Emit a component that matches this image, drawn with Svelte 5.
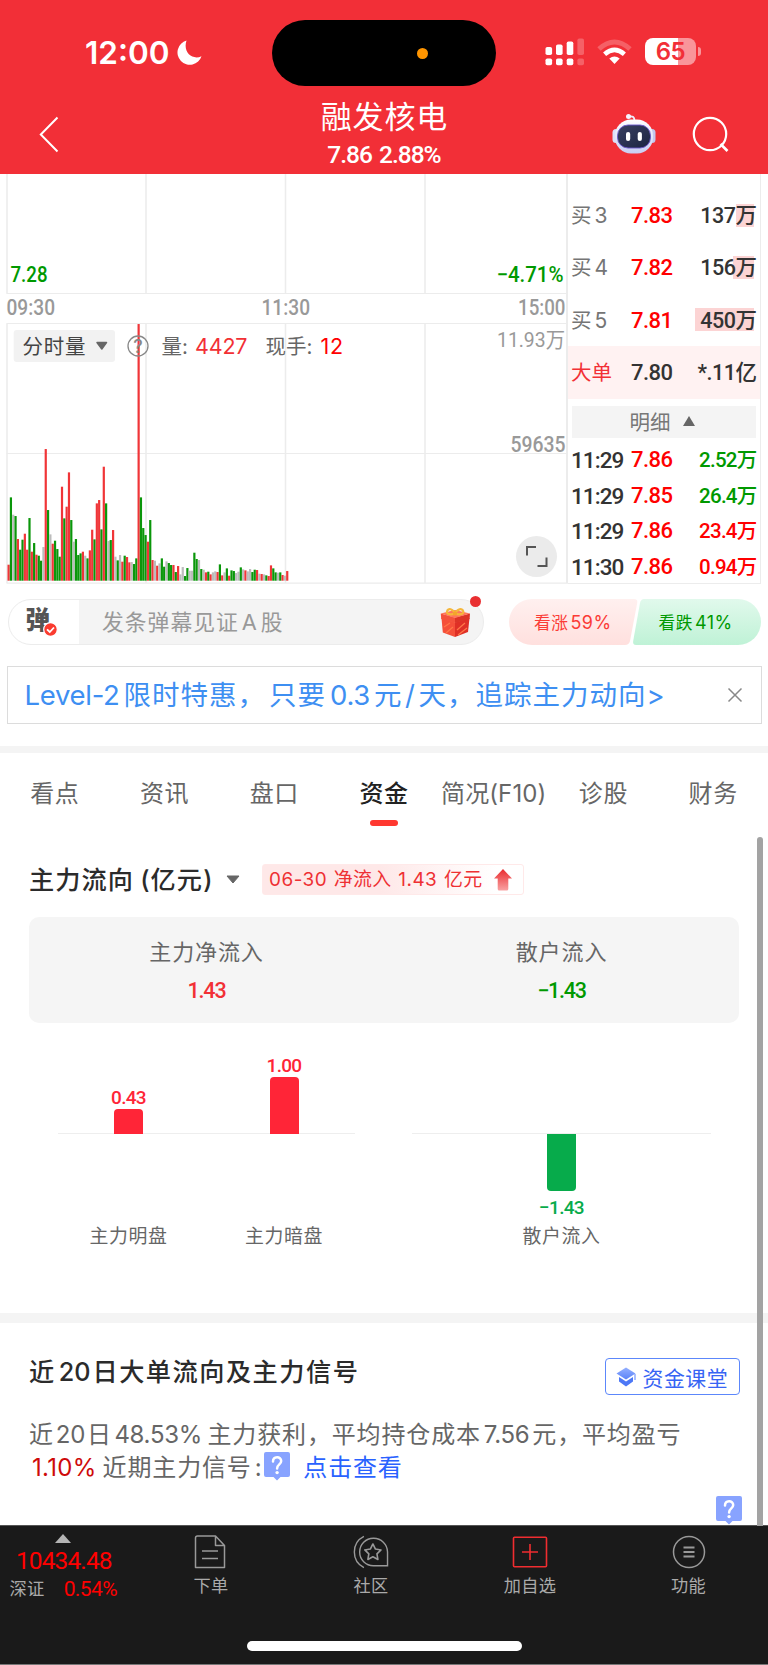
<script>
  // Minute volumes: R = up, G = down, g = flat, followed by the height in thirds of a pixel.
  const volume =
    'R48 G250 g198 G194 R125 G93 G123 R141 R93 G188 R87 G113 R78 G75 G60 g101 R395 G212 g139 R111 G120 G95 G72 R282 G187 R222 R325 G182 g117 G125 G77 G82 R87 g75 G67 R91 R153 G124 R232 R242 G154 R342 G232 g119 G122 R152 g72 G61 g77 R57 G75 R71 R55 g56 G50 G67 R770 G250 G158 G137 R117 G182 R62 g60 R45 g52 G67 G42 g58 G53 G47 R47 G26 R44 g19 g41 G14 G38 g30 g30 G84 G65 g62 G35 g33 R25 G27 R19 g25 g28 R26 G49 R16 g25 G37 R15 G31 G29 g23 g27 G40 g34 R31 g28 g35 G26 G33 R32 g21 R20 g19 G16 R14 R46 G37 G25 g24 G25 R17 g15 R29';
  const tone = { R: '#f03538', G: '#0a960a', g: '#bcbcbc' };
  const bars = volume.split(' ').map((v, i) => ({
    x: 7.5 + i * 2.322,
    h: Number(v.slice(1)) / 3,
    c: tone[v[0]]
  }));
  const bids = [
    { n: '3', price: '7.83', qty: '137', w: 18 },
    { n: '4', price: '7.82', qty: '156', w: 21 },
    { n: '5', price: '7.81', qty: '450', w: 59 }
  ];
  const trades = [
    { t: '11:29', price: '7.86', qty: '2.52', up: false },
    { t: '11:29', price: '7.85', qty: '26.4', up: false },
    { t: '11:29', price: '7.86', qty: '23.4', up: true },
    { t: '11:30', price: '7.86', qty: '0.94', up: true }
  ];
  const tabs = ['看点', '资讯', '盘口', '资金', '简况(F10)', '诊股', '财务'];
</script>

{#snippet help()}
  <svg class="help" width="26" height="29" viewBox="0 0 26 29">
    <path d="M2 0H24Q26 0 26 2V23Q26 25 24 25H16.5L13 28.5L9.500 25H2Q0 25 0 23V2Q0 0 2 0Z" fill="#88a3ff" />
    <path d="M9 9.500C9 3.800 17.200 4 17.200 9C17.200 12.500 13.100 12.300 13.100 16.500" fill="none" stroke="#fff" stroke-width="2.500" stroke-linecap="round" />
    <circle cx="13.1" cy="20.6" r="1.7" fill="#fff" />
  </svg>
{/snippet}

<div class="app">
  <header>
    <div class="status">
      <div class="clock">
        <span>12:00</span>
        <svg width="25" height="26" viewBox="0 0 25 26"><path d="M9.500 0.600A12.300 12.300 0 1 0 24.500 16.200C16 20.500 5.500 13 9.500 0.600Z" fill="#fff" /></svg>
      </div>
      <div class="island"><i></i></div>
      <div class="signals">
        <svg width="40" height="28" viewBox="0 0 40 28" fill="#fff">
          <rect x="0.500" y="9" width="6.600" height="8" rx="1.800" /><rect x="11" y="6.500" width="6.600" height="10.500" rx="1.800" /><rect x="21.700" y="3.500" width="6.600" height="13.500" rx="1.800" />
          <rect x="0.500" y="20.500" width="6.600" height="6.800" rx="1.800" /><rect x="11" y="20.500" width="6.600" height="6.800" rx="1.800" /><rect x="21.700" y="20.500" width="6.600" height="6.800" rx="1.800" />
          <g opacity=".24"><rect x="32.400" y="0.500" width="6.600" height="16.500" rx="1.800" /><rect x="32.400" y="20.500" width="6.600" height="6.800" rx="1.800" /></g>
        </svg>
        <svg width="35" height="26" viewBox="0 0 35 26" fill="none" stroke="#fff">
          <path d="M2 10Q17.500 -4 33 10" stroke-width="5" opacity=".24" />
          <path d="M7.600 15.200Q17.500 6.500 27.400 15.200" stroke-width="4.600" />
          <path d="M12.300 19.600Q17.500 15.600 22.700 19.600L17.500 25Z" fill="#fff" stroke="none" />
        </svg>
        <div class="battery"><b>65</b></div>
      </div>
    </div>
    <div class="nav">
      <svg class="back" width="20" height="37" viewBox="0 0 20 37"><path d="M18.500 1.500L1.800 18.500L18.500 35.500" fill="none" stroke="#fff" stroke-width="2" /></svg>
      <div class="title">
        <h1>融发核电</h1>
        <p>7.86 2.88%</p>
      </div>
      <div class="tools">
        <svg width="44" height="42" viewBox="0 0 44 42">
          <defs>
            <linearGradient id="shell" x1="0" y1="0" x2="0" y2="1"><stop offset="0" stop-color="#fff" /><stop offset="1" stop-color="#c9cdf3" /></linearGradient>
            <linearGradient id="visor" x1="0" y1="0" x2="1" y2="1"><stop offset="0" stop-color="#3a4161" /><stop offset="1" stop-color="#1c2342" /></linearGradient>
          </defs>
          <path d="M17 3.500C21 3 22.500 4 22.500 8" fill="none" stroke="#ececfb" stroke-width="1.800" />
          <circle cx="16.500" cy="3.500" r="2.500" fill="#f5f5ff" />
          <rect x="0.500" y="16" width="7" height="14" rx="3.500" fill="#dcdff8" /><rect x="36.500" y="16" width="7" height="14" rx="3.500" fill="#c3c7ef" />
          <rect x="3" y="6.500" width="38" height="34" rx="16" fill="url(#shell)" />
          <rect x="5.500" y="12" width="33" height="23" rx="10.500" fill="url(#visor)" stroke="#6a56c9" stroke-width=".9" />
          <rect x="14" y="19" width="4.200" height="9" rx="2.100" fill="#fff" /><rect x="25.700" y="19" width="4.200" height="9" rx="2.100" fill="#fff" />
        </svg>
        <svg width="38" height="38" viewBox="0 0 38 38" fill="none" stroke="#fff" stroke-width="2.200"><circle cx="18" cy="18" r="16.200" /><path d="M28.500 28L35.500 35" stroke-width="2.600" /></svg>
      </div>
    </div>
  </header>

  <section class="market">
    <svg class="chart" width="568" height="411" viewBox="0 174 568 411">
      <g stroke="#ececec" stroke-width="1.500">
        <path d="M7 174V293.500M7 323.500V583M146 174V293.500M146 323.500V583" />
        <path d="M285.500 174V293.500M285.500 323.500V583M425 174V293.500M425 323.500V583" />
        <path d="M567 174V583" stroke-width="2" />
        <path d="M6.500 293.500H567M6.500 323.500H567M6.500 583.200H568M6.500 453.500H567" stroke-width="1.200" />
      </g>
      {#each bars as b}
        <rect x={b.x} y={580.7 - b.h} width="2.200" height={b.h} fill={b.c} />
      {/each}
      <g class="num" font-size="21.500">
        <text x="10.500" y="281.500" textLength="37" lengthAdjust="spacingAndGlyphs" fill="#090" font-weight="500">7.28</text>
        <text x="496.500" y="281.500" textLength="67" lengthAdjust="spacingAndGlyphs" fill="#090" font-weight="500">−4.71%</text>
        <g fill="#999" font-weight="500">
          <text x="6.500" y="315.300" textLength="48.500" lengthAdjust="spacingAndGlyphs">09:30</text>
          <text x="261.500" y="315.300" textLength="48.500" lengthAdjust="spacingAndGlyphs">11:30</text>
          <text x="518" y="315.300" textLength="47.500" lengthAdjust="spacingAndGlyphs">15:00</text>
        </g>
        <g fill="#999">
          <text x="497" y="347" font-size="21" textLength="68" lengthAdjust="spacingAndGlyphs">11.93万</text>
          <text x="510.500" y="452" font-weight="500" textLength="55" lengthAdjust="spacingAndGlyphs">59635</text>
        </g>
      </g>
      <rect x="13.700" y="330" width="101.300" height="32" rx="3" fill="#f2f2f2" />
      <g class="label" font-size="20.500">
        <text x="22.500" y="354.300" textLength="63" fill="#444">分时量</text>
        <text x="161.500" y="354.300" fill="#666">量:</text>
        <text x="265.500" y="354.300" fill="#666">现手:</text>
        <text x="195" y="353.500" textLength="52.500" fill="#f23035" font-size="21.500">4427</text>
        <text x="320.500" y="353.500" textLength="22.500" fill="#f00" font-size="21.500">12</text>
        <text x="133.300" y="353" fill="#888" font-size="18" font-weight="500">?</text>
      </g>
      <path d="M97 342.500H106.500L101.800 349Z" fill="#666" stroke="#666" stroke-width="1.500" stroke-linejoin="round" />
      <circle cx="138" cy="346" r="10" fill="none" stroke="#888" stroke-width="1.300" />
      <circle cx="536.500" cy="556.500" r="20.500" fill="#ebebeb" />
      <path d="M527 555.500V547H536M546.500 557.500V566H537.500" fill="none" stroke="#555" stroke-width="2" />
    </svg>
    <aside>
      {#each bids as b}
        <div class="bid"><span class="lv">买<em>{b.n}</em></span><b class="up">{b.price}</b><span class="qty"><i style="width:{b.w}px"></i><span>{b.qty}万</span></span></div>
      {/each}
      <div class="bid big"><span class="lv">大单</span><b>7.80</b><span class="qty star"><span>*.11亿</span></span></div>
      <div class="detail">明细<svg width="12" height="10" viewBox="0 0 12 10"><path d="M6 0L12 10H0Z" fill="#666" /></svg></div>
      {#each trades as t}
        <div class="trade"><span>{t.t}</span><b class="up">{t.price}</b><span class="vol" class:up={t.up}>{t.qty}万</span></div>
      {/each}
    </aside>
  </section>

  <section class="social">
    <div class="danmu">
      <div class="switch">弹<svg width="15" height="15" viewBox="0 0 15 15"><circle cx="7.500" cy="7.500" r="6.800" fill="#fa3b2f" stroke="#fff" stroke-width="1.200" /><path d="M4 7.300L6.800 10L11 5.500" fill="none" stroke="#fff" stroke-width="1.800" /></svg></div>
      <div class="input">发条弹幕见证<span>A</span>股</div>
      <svg class="gift" width="31" height="32" viewBox="0 0 31 32">
        <path d="M1.500 12L15 16.500V31L2.800 26.500Z" fill="#f5503a" /><path d="M29.500 12L15 16.500V31L28 26Z" fill="#df3026" />
        <path d="M0.800 7.500L15 11.500V17L1.200 13Z" fill="#f4523c" /><path d="M30 7.500L15 11.500V17L29.600 13Z" fill="#dc3427" />
        <path d="M0.800 7.500L15 4L30 7.500L15 12Z" fill="#ff765c" />
        <path d="M4 21L10 17M6 27L13 21M17 24L25 17M18 29L27 22" stroke="#ff7748" stroke-width="1.200" />
        <path d="M15 7.500C11 9 6.500 8.500 7 5.500C8 1.500 13 3 15 7.500ZC19 9 23.800 8.500 23.300 5.500C22.300 1.500 17 3 15 7.500Z" fill="none" stroke="#f5b73c" stroke-width="2.200" />
        <rect x="13" y="5.500" width="4" height="4" rx="1.500" fill="#f3a52b" />
      </svg>
      <i class="dot"></i>
    </div>
    <div class="vote">
      <svg width="252" height="46" viewBox="0 0 252 46">
        <defs>
          <linearGradient id="bull" x1="0" y1="0" x2="0" y2="1"><stop offset="0" stop-color="#fff0ef" /><stop offset="1" stop-color="#ffe0de" /></linearGradient>
          <linearGradient id="bear" x1="0" y1="0" x2="0" y2="1"><stop offset="0" stop-color="#e1f9ec" /><stop offset="1" stop-color="#bff2d6" /></linearGradient>
        </defs>
        <path d="M23 0H125Q129 0 128.200 4L121 42Q120 46 116 46H23A23 23 0 0 1 23 0Z" fill="url(#bull)" />
        <path d="M135 0H229A23 23 0 0 1 229 46H127Q123.500 46 124.200 42L131 4Q132 0 135 0Z" fill="url(#bear)" />
      </svg>
      <span class="bull">看涨<em>59%</em></span><span class="bear">看跌<em>41%</em></span>
    </div>
  </section>

  <section class="promo">
    <p><span class="lat">Level-2</span>限时特惠，<span class="only">只要</span><span class="lat n">0.3</span>元<span class="sl">/</span>天，追踪主力动向<span class="lat">&gt;</span></p>
    <svg width="16" height="16" viewBox="0 0 16 16"><path d="M1.500 1.500L14.500 14.500M14.500 1.500L1.500 14.500" stroke="#888" stroke-width="1.500" /></svg>
  </section>

  <nav class="tabs">
    {#each tabs as t}
      <span class:active={t === '资金'} class:wide={t.length > 4}>{t}</span>
    {/each}
  </nav>

  <main>
    <i class="scroll"></i>
    <div class="flow-head">
      <h2>主力流向<span>(</span>亿元<span>)</span></h2>
      <svg width="14" height="9" viewBox="0 0 14 9"><path d="M1 1H13L7 8Z" fill="#666" stroke="#666" stroke-linejoin="round" /></svg>
      <div class="tag">
        <span><em>06-30</em> 净流入 <em>1.43</em> 亿元</span>
        <svg width="18" height="22" viewBox="0 0 18 22"><defs><linearGradient id="rise" x1="0" y1="0" x2="0" y2="1"><stop offset="0" stop-color="#e92a2d" /><stop offset="1" stop-color="#f9a3a3" /></linearGradient></defs><path d="M9 0L18 9.500H14.300V20Q14.300 21.500 12.800 21.500H5.200Q3.700 21.500 3.700 20V9.500H0Z" fill="url(#rise)" /></svg>
      </div>
    </div>
    <div class="summary">
      <div><span>主力净流入</span><b class="red">1.43</b></div>
      <div><span>散户流入</span><b class="green">−1.43</b></div>
    </div>
    <div class="columns">
      <div class="group">
        <div class="col"><div class="plus"><b>0.43</b><i style="height:24.5px"></i></div><div class="minus"></div><span>主力明盘</span></div>
        <div class="col"><div class="plus"><b>1.00</b><i style="height:57px"></i></div><div class="minus"></div><span>主力暗盘</span></div>
      </div>
      <div class="group single">
        <div class="col"><div class="plus"></div><div class="minus"><i style="height:57.5px"></i><b>−1.43</b></div><span>散户流入</span></div>
      </div>
    </div>
    <div class="sep"></div>
    <div class="signal-head">
      <h2>近<em>20</em>日大单流向及主力信号</h2>
      <div class="course">
        <svg width="21" height="20" viewBox="0 0 21 20"><defs><linearGradient id="cap" x1="0" y1="0" x2="0" y2="1"><stop offset="0" stop-color="#94b0ff" /><stop offset="1" stop-color="#5a82f8" /></linearGradient></defs><path d="M10 0.500L19.500 6.500L10 12.500L0.500 6.500Z" fill="url(#cap)" /><path d="M3 10L10 14.500L17 10V14.500L10 19.500L3 14.500Z" fill="#4d78f6" /><path d="M19 7V13" stroke="#88a5ff" stroke-width="1.400" /></svg>
        资金课堂
      </div>
    </div>
    <div class="para">
      <p>近<em class="d">20</em>日<em class="z">48.53%</em>主力获利，平均持仓成本<em class="p">7.56</em>元，平均盈亏</p>
      <p><strong>1.10%</strong>近期主力信号<em>:</em>{@render help()}<a>点击查看</a></p>
    </div>
    <div class="tail">{@render help()}</div>
  </main>

  <footer>
    <div class="index">
      <svg width="16" height="9" viewBox="0 0 16 9"><path d="M8 0L16 9H0Z" fill="#b5b5b5" /></svg>
      <b>10434.48</b>
      <p><span>深证</span><b>0.54%</b></p>
    </div>
    <div class="item">
      <svg width="34" height="34" viewBox="0 0 34 34" fill="none" stroke="#999" stroke-width="1.500" stroke-linejoin="round"><path d="M3.500 1H21.500L30.500 10.500V32.500H1.500V3Q1.500 1 3.500 1ZM21.500 1V10.500H30.500M8 16H24M8 23.500H24" /></svg>
      <span>下单</span>
    </div>
    <div class="item">
      <svg width="38" height="36" viewBox="0 0 38 36" fill="none" stroke="#999" stroke-width="1.500"><path d="M11.500 1.500A18.500 18.500 0 0 0 11.500 34.500M21.500 3.500A14.500 14.500 0 1 0 21.500 32.500H36.500V18A14.700 14.700 0 0 0 21.500 3.500Z" /><path d="M21 9.500L23.700 14.900L29.600 15.800L25.300 20L26.300 25.900L21 23.100L15.700 25.900L16.700 20L12.400 15.800L18.300 14.900Z" stroke-linejoin="round" stroke-width="1.700" /></svg>
      <span>社区</span>
    </div>
    <div class="item">
      <svg width="36" height="34" viewBox="0 0 36 34" fill="none" stroke="#f02d30" stroke-width="1.600"><rect x="1.500" y="2.300" width="33" height="29.500" rx="1" /><path d="M10 17H26M18 9V25" /></svg>
      <span>加自选</span>
    </div>
    <div class="item">
      <svg width="34" height="34" viewBox="0 0 34 34" fill="none" stroke="#999" stroke-width="1.500"><circle cx="17" cy="17" r="15.500" /><path d="M11.500 12.500H22.500M11.500 17H22.500M11.500 21.500H22.500" stroke-width="1.800" /></svg>
      <span>功能</span>
    </div>
    <i class="home"></i>
  </footer>
</div>

<style>
  :global(body) { margin: 0; background: #fff; }
  .app { width: 768px; height: 1665px; overflow: hidden; background: #fff; color: #333; font-family: Inter, "Noto Sans CJK SC", sans-serif; display: flex; flex-direction: column; }
  .app > * { box-sizing: border-box; flex: none; }
  h1, h2, p { margin: 0; font-weight: 400; }
  em, i { font-style: normal; }
  svg { display: block; flex: none; }
  b { font-weight: 500; }
  .up { color: #f00; }

  header { height: 174px; background: #f22f37; color: #fff; }
  .status { height: 98px; display: grid; grid-template-columns: 272px 224px 272px; }
  .clock { display: flex; align-items: center; gap: 7px; padding: 8px 0 0 85px; font-size: 31.5px; font-weight: 600; letter-spacing: 0; }
  .clock span { line-height: 32px; width: 85px; white-space: nowrap; }
  .island { width: 224px; height: 66px; margin-top: 20px; border-radius: 33px; background: #000; display: flex; align-items: center; justify-content: flex-end; box-sizing: border-box; padding-right: 68px; }
  .island i { width: 11px; height: 11px; border-radius: 50%; background: #ff9500; }
  .signals { display: flex; align-items: flex-start; padding: 38px 0 0 48.500px; }
  .signals svg + svg { margin: 1px 0 0 12px; }
  .battery { position: relative; margin-left: 13.500px; width: 51px; height: 27px; border-radius: 8px; background: linear-gradient(90deg, #fff 65%, #f9959a 65%); text-align: center; }
  .battery b { font: 600 24px/28px Inter, sans-serif; letter-spacing: -.5px; color: #f22f37; }
  .battery::after { content: ""; position: absolute; left: 52.5px; top: 9px; width: 3.5px; height: 9px; border-radius: 0 4px 4px 0; background: #f9959a; }
  .nav { height: 76px; display: grid; grid-template-columns: 1fr auto 1fr; }
  .back { margin: 18px 0 0 39px; }
  .title { text-align: center; }
  .title h1 { font-size: 31px; line-height: 37px; letter-spacing: .8px; margin-right: -.8px; }
  .title p { font: 500 24.500px/24px Roboto, sans-serif; letter-spacing: -1px; word-spacing: 2px; margin-top: 8px; }
  .tools { display: flex; align-items: flex-start; justify-content: flex-end; gap: 36px; padding: 15px 38px 0 0; }
  .tools svg + svg { margin-top: 3px; }

  .market { height: 411px; display: flex; }
  .num { font-family: Roboto, "Noto Sans CJK SC", sans-serif; }
  .label { font-family: Inter, "Noto Sans CJK SC", sans-serif; }
  aside { width: 191.500px; border-right: 1.500px solid #ececec; border-bottom: 1.500px solid #ececec; padding-top: 15.500px; height: 393px; font: 500 22px/30px Roboto, "Noto Sans CJK SC", sans-serif; }
  .bid, .trade { display: grid; grid-template-columns: 60px 50px 1fr; align-items: center; height: 52.250px; box-sizing: border-box; padding: 1px 3px 0 3px; letter-spacing: -.5px; }
  .bid b, .trade b { font-size: 22px; font-weight: 500; letter-spacing: -.5px; }
  .lv { font: 400 20.500px/30px Inter, "Noto Sans CJK SC", sans-serif; color: #757575; letter-spacing: 0; white-space: nowrap; }
  .lv em { margin-left: 3px; font-size: 21px; }
  .qty { position: relative; text-align: right; white-space: nowrap; font-size: 21.500px; }
  .qty i { position: absolute; right: 3px; top: 2.500px; height: 23px; background: #fcd4d4; }
  .qty span { position: relative; }
  .big { background: #fff2f2; }
  .big .lv { color: #f23035; }
  .detail { display: flex; align-items: center; justify-content: center; gap: 12px; margin: 7.500px 3.500px 3.500px 4px; height: 32px; background: #f4f4f4; color: #777; font: 400 20.500px/30px "Noto Sans CJK SC", sans-serif; padding: 0 4px 2px 0; box-sizing: border-box; }
  .trade { height: 35.750px; }
  .trade > span { white-space: nowrap; font-size: 22.500px; letter-spacing: -.95px; }
  .trade .vol { text-align: right; font-size: 20.500px; color: #090; letter-spacing: -.75px; }
  .trade .vol.up { color: #f00; }

  .social { height: 81px; padding: 13.500px 7.500px 0 7.500px; display: flex; justify-content: space-between; }
  .danmu { position: relative; width: 476px; height: 46px; box-sizing: border-box; border: 1.500px solid #ececec; border-radius: 23px; display: flex; background: linear-gradient(90deg, #fff 70px, #f4f4f4 70px); }
  .switch { position: relative; width: 70px; padding-left: 17px; box-sizing: border-box; font: 900 24.500px/38px "Noto Sans CJK SC", sans-serif; color: #555; }
  .switch svg { position: absolute; left: 34px; top: 22px; }
  .input { flex: 1; padding-left: 23.500px; font-size: 21.800px; line-height: 44px; letter-spacing: 1px; color: #999; }
  .input span { margin: 0 3px; }
  .gift { margin: 6px 12px 0 0; }
  .dot { position: absolute; right: 2px; top: -4px; width: 11px; height: 11px; border-radius: 50%; background: #e92f31; }
  .vote { position: relative; width: 252px; height: 46px; }
  .vote span { position: absolute; top: 0; font-size: 16.700px; line-height: 47px; letter-spacing: .5px; white-space: nowrap; }
  .vote em { font-size: 18px; margin-left: 2px; }
  .bull { left: 25.500px; color: #fb3b36; }
  .bear { left: 150px; color: #090; }

  .promo { margin: 0 6px 0 6.500px; height: 58px; border: 1px solid #dcdcdc; display: flex; align-items: center; justify-content: space-between; padding: 0 18.500px 0 17px; color: #3e8ff2; }
  .promo p { font-size: 27.500px; letter-spacing: 1px; white-space: nowrap; line-height: 57px; }
  .promo .lat { letter-spacing: -.3px; margin-right: 4px; }
  .promo .only { margin-left: 3px; }
  .promo .n { margin: 0 4px; }
  .promo .sl { margin: 0 2.500px; }

  .tabs { margin-top: 21.500px; border-top: 7px solid #f4f4f4; height: 92px; display: grid; grid-template-columns: repeat(7, 1fr); font-size: 24px; letter-spacing: .6px; color: #666; text-align: center; line-height: 81px; }
  .tabs span { white-space: nowrap; position: relative; }
  .tabs .wide { letter-spacing: .1px; }
  .tabs .active { color: #222; font-weight: 500; }
  .active::after { content: ""; position: absolute; left: 50%; top: 67.500px; width: 28px; height: 5.500px; margin-left: -14px; border-radius: 3px; background: #ff3830; }

  main { position: relative; height: 687.500px; padding-top: 26.500px; }
  .scroll { position: absolute; right: 5.300px; top: -1px; width: 5.500px; height: 689px; background: #a3a3a3; border-radius: 3px 3px 0 0; z-index: 2; }
  h2 { font-weight: 500; color: #2b2b2b; white-space: nowrap; }
  .flow-head { display: flex; align-items: center; padding-left: 29px; height: 31px; }
  .flow-head h2 { font-size: 25.200px; letter-spacing: 1.100px; line-height: 31px; width: 197px; padding-top: 1px; }
  .flow-head h2 span:first-child { margin-left: 6px; }
  .tag { margin-left: 22px; width: 262px; height: 31px; box-sizing: border-box; display: flex; align-items: center; justify-content: space-between; padding: 0 11px 0 6px; border: 1px solid #ffe9e9; border-radius: 3px; background: linear-gradient(90deg, #fee8e8 45%, #fff 90%); color: #ee3033; font-size: 18.900px; line-height: 29px; letter-spacing: .35px; word-spacing: 1px; white-space: nowrap; }
  .tag em { letter-spacing: .5px; }
  .summary { margin: 21.500px 29px 0; height: 106.500px; border-radius: 10px; background: #f5f5f5; display: grid; grid-template-columns: 1fr 1fr; text-align: center; }
  .summary div { display: flex; flex-direction: column; padding-top: 19px; }
  .summary span { font-size: 22px; letter-spacing: .9px; line-height: 33px; color: #666; }
  .summary b { font: 500 21.500px/32px Roboto, sans-serif; letter-spacing: -1.200px; margin-top: 6px; }
  .red { color: #f23035; }
  .green { color: #090; }
  .columns { display: grid; grid-template-columns: 297.500px 299px; gap: 57px; padding: 0 0 0 57.500px; height: 289.500px; }
  .group { display: flex; justify-content: space-between; padding: 0 21px; height: 225px; background: linear-gradient(#eee, #eee) 0 110px / 100% 1px no-repeat; }
  .single { justify-content: center; padding: 0; }
  .col { width: 100px; text-align: center; }
  .col i { width: 29px; }
  .plus { height: 110.500px; display: flex; flex-direction: column; align-items: center; justify-content: flex-end; }
  .plus i { background: #ff2537; border-radius: 4px 4px 0 0; }
  .minus { height: 89px; display: flex; flex-direction: column; align-items: center; }
  .minus i { background: #07ab4b; border-radius: 0 0 4px 4px; }
  .col b { font: 500 19px/20px Roboto, sans-serif; letter-spacing: -.7px; color: #ff2537; margin-bottom: 1px; }
  .minus b { color: #07ab4b; margin-top: 7px; }
  .col span { font-size: 18.900px; letter-spacing: .6px; line-height: 28px; color: #666; }
  .sep { height: 10.500px; background: #f4f4f4; }
  .signal-head { display: flex; justify-content: space-between; padding: 35px 28.500px 0 29px; height: 38px; }
  .signal-head h2 { font-size: 25.200px; letter-spacing: 1.500px; line-height: 29px; }
  .signal-head em { margin: 0 2px 0 3px; letter-spacing: 0; }
  .course { width: 135px; height: 37px; box-sizing: border-box; border: 1.500px solid #5c87fb; border-radius: 4px; display: flex; align-items: center; gap: 6px; padding-left: 10px; color: #3764f4; font-size: 20.900px; letter-spacing: .5px; white-space: nowrap; }
  .para { padding: 23px 0 0 29px; color: #666; font-size: 24px; letter-spacing: .85px; line-height: 32.500px; }
  .para p { display: flex; white-space: nowrap; }
  .para em { letter-spacing: -.3px; margin: 0 3px; }
  .para em.d { margin: 0 2px; }
  .para em.z { margin: 0 5.500px 0 2.500px; }
  .para strong { color: #ce0a0a; font-weight: 400; letter-spacing: .3px; margin: 0 6px 0 3px; }
  .para a { color: #2962ff; margin-left: 13px; }
  .tail { display: flex; justify-content: flex-end; padding: 12px 26.500px 0 0; }

  footer { position: relative; height: 140px; background: #1a1a1a; color: #aaa; border-top: 1px solid #555; border-bottom: 1px solid #777; display: grid; grid-template-columns: 131px 160px 160px 158px 159px; }
  .index { display: flex; flex-direction: column; color: #f00; padding-top: 8px; }
  .index svg { margin-left: 55px; }
  .index > b { margin: 6px 0 0 16px; font: 400 24.500px/24px Roboto, sans-serif; letter-spacing: -.9px; }
  .index p { display: flex; align-items: center; gap: 19px; margin: 4px 0 0 9.500px; }
  .index p span { color: #aaa; font-size: 17.300px; line-height: 24px; letter-spacing: .3px; }
  .index p b { font: 400 21px/24px Roboto, sans-serif; letter-spacing: -.6px; }
  .item { display: flex; flex-direction: column; align-items: center; padding-top: 8.500px; font-size: 17.200px; letter-spacing: .3px; }
  .item svg { height: 34px; }
  .item span { line-height: 24px; margin-top: 5px; }
  .home { position: absolute; left: 246.500px; top: 115px; width: 275px; height: 9.500px; border-radius: 5px; background: #fff; }
</style>
